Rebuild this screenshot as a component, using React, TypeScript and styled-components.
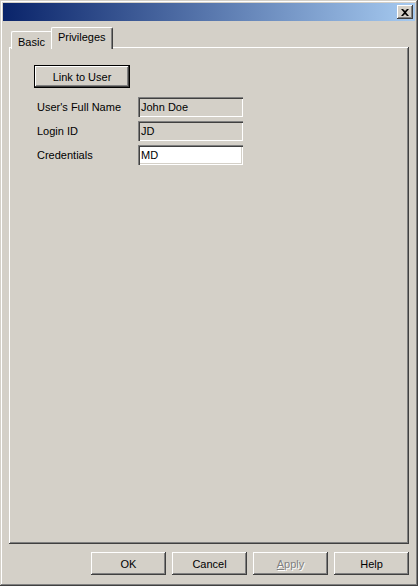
import React from 'react';
import styled, { createGlobalStyle, css } from 'styled-components';

const GlobalStyle = createGlobalStyle`
  html, body {
    margin: 0;
    padding: 0;
    background: #d4d0c8;
  }
  body {
    font-family: "Liberation Sans", Arial, sans-serif;
    font-size: 11px;
    color: #000000;
  }
`;

const raised = css`
  box-shadow:
    inset -1px -1px 0 #404040,
    inset 1px 1px 0 #ffffff,
    inset -2px -2px 0 #808080,
    inset 2px 2px 0 #d4d0c8;
`;

const Window = styled.div`
  box-sizing: border-box;
  width: 418px;
  height: 586px;
  padding: 3px;
  background: #d4d0c8;
  display: flex;
  flex-direction: column;
  box-shadow:
    inset -1px -1px 0 #404040,
    inset 1px 1px 0 #d4d0c8,
    inset -2px -2px 0 #808080,
    inset 2px 2px 0 #ffffff;
`;

const TitleBar = styled.div`
  height: 18px;
  flex: none;
  display: flex;
  align-items: center;
  justify-content: flex-end;
  padding-right: 2px;
  background: linear-gradient(to right, #0a246a, #a6caf0);
`;

const CloseButton = styled.div`
  box-sizing: border-box;
  width: 16px;
  height: 14px;
  background: #d4d0c8;
  display: flex;
  align-items: center;
  justify-content: center;
  ${raised}
`;

const Body = styled.div`
  flex: 1;
  display: flex;
  flex-direction: column;
  padding: 7px 6px 0 6px;
`;

const TabStrip = styled.div`
  display: flex;
  align-items: flex-end;
  height: 21px;
  padding-left: 2px;
  position: relative;
  z-index: 1;
  margin-bottom: -2px;
`;

const Tab = styled.div<{ $active?: boolean }>`
  box-sizing: border-box;
  background: #d4d0c8;
  border-top: 1px solid #ffffff;
  border-left: 1px solid #ffffff;
  border-right: 1px solid #404040;
  box-shadow: inset -1px 0 0 #808080;
  border-radius: 2px 2px 0 0;
  display: flex;
  align-items: center;
  justify-content: center;
  ${(p) =>
    p.$active
      ? css`
          height: 22px;
          padding: 0 6px 3px;
          margin: 0 -2px;
          z-index: 2;
        `
      : css`
          height: 18px;
          padding: 2px 8px 0 6px;
          border-right: none;
          box-shadow: none;
        `}
`;

const Panel = styled.div`
  box-sizing: border-box;
  width: 400px;
  height: 497px;
  flex: none;
  background: #d4d0c8;
  padding: 18px 0 0 25px;
  box-shadow:
    inset -1px -1px 0 #404040,
    inset 1px 1px 0 #ffffff,
    inset -2px -2px 0 #808080;
`;

const PushButton = styled.button<{ $default?: boolean; $width: number }>`
  box-sizing: border-box;
  width: ${(p) => p.$width}px;
  height: 23px;
  padding: 0;
  border: none;
  background: #d4d0c8;
  font-family: "Liberation Sans", Arial, sans-serif;
  font-size: 11px;
  color: #000000;
  ${raised}
  ${(p) =>
    p.$default &&
    css`
      border: 1px solid #000000;
      box-shadow:
        inset -1px -1px 0 #404040,
        inset 1px 1px 0 #ffffff,
        inset -2px -2px 0 #808080;
    `}
  &:disabled {
    color: #808080;
    text-shadow: 1px 1px 0 #ffffff;
  }
`;

const Form = styled.div`
  display: grid;
  grid-template-columns: 101px 105px;
  row-gap: 4px;
  margin-top: 9px;
  padding-left: 3px;
  align-items: center;
`;

const Label = styled.div`
  line-height: 20px;
`;

const Field = styled.div<{ $readOnly?: boolean }>`
  box-sizing: border-box;
  height: 20px;
  padding: 2px 3px;
  line-height: 16px;
  background: ${(p) => (p.$readOnly ? '#d4d0c8' : '#ffffff')};
  box-shadow:
    inset 1px 1px 0 #808080,
    inset 2px 2px 0 #404040,
    inset -1px -1px 0 #ffffff,
    inset -2px -2px 0 #d4d0c8;
`;

const Footer = styled.div`
  display: flex;
  justify-content: flex-end;
  gap: 6px;
  padding: 8px 0 0 0;
`;

const Underline = styled.span`
  text-decoration: underline;
`;

const App: React.FC = () => {
  return (
    <>
      <GlobalStyle />
      <Window>
        <TitleBar>
          <CloseButton>
            <svg width="8" height="7" viewBox="0 0 8 7">
              <path d="M0 0h2l2 2 2-2h2L5 3.5 8 7H6L4 5 2 7H0l3-3.5z" fill="#000" />
            </svg>
          </CloseButton>
        </TitleBar>
        <Body>
          <TabStrip>
            <Tab>Basic</Tab>
            <Tab $active>Privileges</Tab>
          </TabStrip>
          <Panel>
            <PushButton $default $width={96}>Link to User</PushButton>
            <Form>
              <Label>User's Full Name</Label>
              <Field $readOnly>John Doe</Field>
              <Label>Login ID</Label>
              <Field $readOnly>JD</Field>
              <Label>Credentials</Label>
              <Field>MD</Field>
            </Form>
          </Panel>
          <Footer>
            <PushButton $width={75}>OK</PushButton>
            <PushButton $width={75}>Cancel</PushButton>
            <PushButton $width={75} disabled>
              <Underline>A</Underline>pply
            </PushButton>
            <PushButton $width={75}>Help</PushButton>
          </Footer>
        </Body>
      </Window>
    </>
  );
};

export default App;
